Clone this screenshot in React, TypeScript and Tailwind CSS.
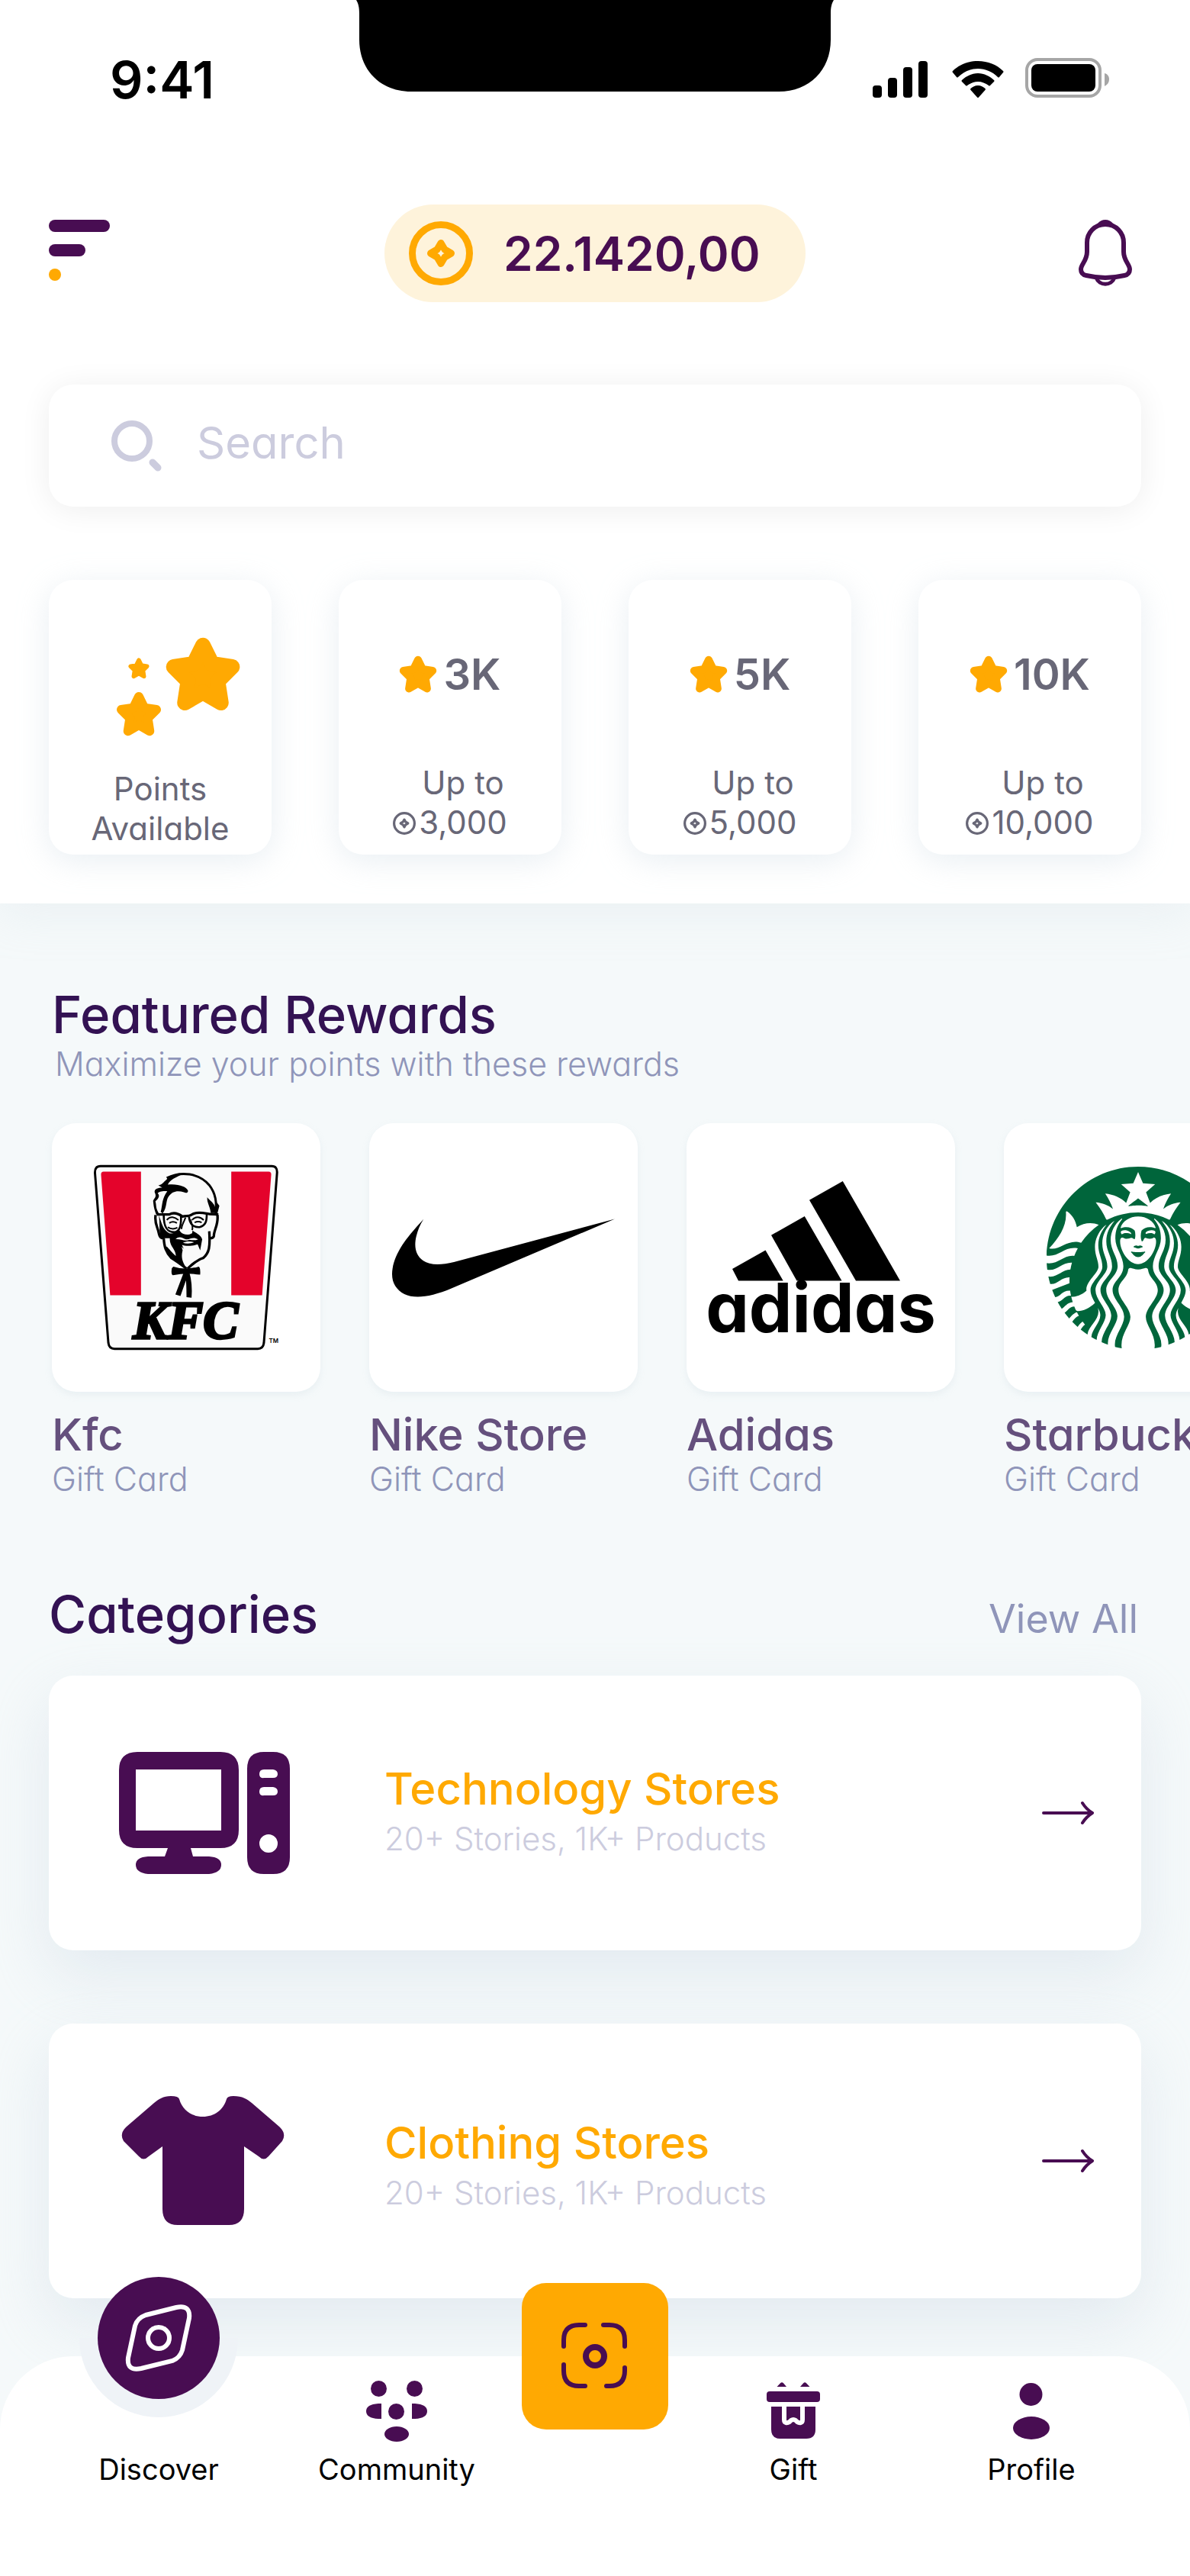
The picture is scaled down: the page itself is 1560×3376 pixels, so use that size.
import type { ReactNode } from 'react';
import { SiStarbucks } from 'react-icons/si';

const tiers = [
  { id: '3k', label: '3K', limit: '3,000' },
  { id: '5k', label: '5K', limit: '5,000' },
  { id: '10k', label: '10K', limit: '10,000' },
];

const rewards = [
  { id: 'kfc', name: 'Kfc', logo: <KfcLogo /> },
  { id: 'nike', name: 'Nike Store', logo: <NikeLogo /> },
  { id: 'adidas', name: 'Adidas', logo: <AdidasLogo /> },
  { id: 'starbucks', name: 'Starbucks', logo: <SiStarbucks className="h-60 w-60 text-[#00653b]" /> },
];

const categories = [
  { id: 'tech', title: 'Technology Stores', icon: <ComputerIcon />, textClass: 'pb-2' },
  { id: 'clothing', title: 'Clothing Stores', icon: <ShirtIcon />, textClass: 'pt-2' },
];

function Notch() {
  return (
    <svg viewBox="0 0 626 120" className="h-[120px] w-[626px] shrink-0" aria-hidden="true">
      <path d="M0 0C3 5 4 10 4 18V52C4 92 32 120 72 120H554C594 120 622 92 622 52V18C622 10 623 5 626 0Z" />
    </svg>
  );
}

function StatusIcons() {
  return (
    <div className="flex items-center">
      <svg viewBox="0 0 72 56" className="h-14 w-[72px]" aria-hidden="true">
        <rect x="0" y="36" width="12" height="16" rx="4" />
        <rect x="20" y="26" width="12" height="26" rx="4" />
        <rect x="40" y="12" width="12" height="40" rx="4" />
        <rect x="60" y="4" width="12" height="48" rx="4" />
      </svg>
      <svg viewBox="0 0 68 56" className="ml-8 h-14 w-[68px]" aria-hidden="true">
        <path d="M34 4C21 4 9 9 1 17Q0 18 1 19L6 25Q7 26 8 25C15 18 24 14 34 14S53 18 60 25Q61 26 62 25L67 19Q68 18 67 17C59 9 47 4 34 4Z" />
        <path d="M34 20C26 20 18 24 13 29Q12 30 13 31L18 36Q19 37 20 36C24 33 29 31 34 31S44 33 48 36Q49 37 50 36L55 31Q56 30 55 29C50 24 42 20 34 20Z" />
        <path d="M34 36C30 36 27 38 24.500 40Q23.500 41 24.500 42L33 51.500Q34 52.500 35 51.500L43.500 42Q44.500 41 43.500 40C41 38 38 36 34 36Z" />
      </svg>
      <svg viewBox="0 0 112 56" className="ml-7 h-14 w-28" aria-hidden="true">
        <rect x="2" y="2" width="96" height="48" rx="14" fill="none" stroke="#a6a6a6" strokeWidth="4" />
        <rect x="8" y="8" width="84" height="36" rx="8" />
        <path d="M104 20C108 21 110 24 110 28S108 35 104 37Z" fill="#a6a6a6" />
      </svg>
    </div>
  );
}

function CoinIcon({ className }: { className: string }) {
  return (
    <svg viewBox="-42 -42 84 84" className={className} fill="none" stroke="currentColor" strokeWidth="9" strokeLinejoin="round" aria-hidden="true">
      <circle r="37.500" />
      <path d="M0-13.500L5-5L13.500 0L5 5L0 13.500L-5 5L-13.500 0L-5-5Z" />
    </svg>
  );
}

function Star({ className }: { className: string }) {
  return (
    <svg viewBox="0 0 24 24" className={className} fill="#ffa902" stroke="#ffa902" strokeWidth="4.800" strokeLinejoin="round" aria-hidden="true">
      <path d="M12 2.800L14.880 8.640L21.200 9.600L16.660 14.110L17.700 20.900L12 17.600L6.300 20.900L7.340 14.110L2.800 9.600L9.120 8.640Z" />
    </svg>
  );
}

function BellIcon() {
  return (
    <svg viewBox="0 0 96 88" className="h-[88px] w-24" fill="none" stroke="#480d52" strokeWidth="6" aria-hidden="true">
      <path d="M49 6C35 6 25 17 25 30V42C25 54 17 58 17 65C17 69 19 72 24 73C41 77 57 77 74 73C79 72 81 69 81 65C81 58 73 54 73 42V30C73 17 63 6 49 6Z" />
      <path d="M40 6C45 0 53 0 58 6Z" fill="#480d52" strokeWidth="3" />
      <path d="M37 76C41 87 57 87 61 76" strokeWidth="5" />
    </svg>
  );
}

function KfcLogo() {
  return (
    <svg viewBox="72 70 733 736" className="h-[244px] w-[244px]" role="img" aria-label="KFC">
      <path d="M100 77H777Q800 77 798 104L746 776Q743 799 722 799H155Q134 799 131 776L78 104Q77 77 100 77Z" fill="#fafafa" stroke="#000" strokeWidth="9" />
      <path d="M112 99H260V587H138L102 110Q102 99 112 99ZM617 99H765Q775 99 775 110L739 587H617Z" fill="#e4032b" />
      {/* hair and head outline */}
      <path d="M362 124C420 94 490 106 530 152C556 186 560 220 555 262" fill="none" stroke="#000" strokeWidth="9" />
      <path d="M328 152C352 152 356 116 402 112L430 106C400 120 374 130 366 150C408 146 440 158 446 174C446 184 436 184 430 180C404 172 384 176 370 196C356 214 366 234 346 264L338 258C346 226 342 206 364 176C346 174 330 178 326 184C338 196 326 208 317 216C322 232 316 240 332 266L320 268C312 246 310 236 308 214C312 202 324 200 314 180C312 166 330 162 344 162Z" />
      <path d="M522 200C532 216 556 222 558 262L536 262C534 238 520 222 522 200ZM560 220L570 234L560 272L552 264Z" />
      {/* glasses */}
      <path d="M322 268H372C390 258 410 266 424 276C438 272 450 276 458 270C480 256 506 262 530 266L566 268" fill="none" stroke="#000" strokeWidth="10" />
      <path d="M350 272C350 320 364 338 392 338C412 336 420 314 418 274M450 278C452 304 466 320 492 318C516 312 520 294 520 268" fill="none" stroke="#000" strokeWidth="8" />
      <path d="M362 290C376 272 394 278 408 290M462 290C476 274 494 276 508 290M372 302Q386 292 402 302M472 300Q486 292 500 300M366 318Q384 330 404 320" fill="none" stroke="#000" strokeWidth="6" />
      {/* ears, cheeks and jaw */}
      <path d="M318 270C312 300 326 318 330 340C334 360 340 362 352 362M562 270C568 304 548 330 548 354Q546 362 532 362M350 362C352 396 358 416 380 440Q400 452 440 482M530 334C534 396 530 420 506 440Q480 448 444 482" fill="none" stroke="#000" strokeWidth="10" />
      <path d="M330 270C342 300 346 330 372 342C390 346 400 338 410 328L416 336C426 348 446 352 462 342L464 332C482 344 496 350 502 366L494 410L484 386C456 396 432 392 422 388L434 414L424 412C418 440 424 454 440 482L396 452C382 434 364 426 356 404L362 394C378 412 388 424 398 432C398 404 372 394 374 362L338 362C330 334 336 302 330 270Z" />
      <path d="M396 366C412 350 424 362 438 366C456 368 462 354 486 366C470 374 458 366 446 370C430 374 414 364 396 366ZM426 380C440 372 456 374 470 378C456 384 438 384 426 380Z" fill="#fafafa" />
      <path d="M436 280C428 304 420 308 420 326M456 288C460 308 468 316 462 330" fill="none" stroke="#000" strokeWidth="6" />
      <path d="M420 396C430 416 420 430 444 472C454 444 464 452 466 432" fill="#fafafa" />
      {/* bow tie */}
      <path d="M388 474Q436 490 488 474Q496 478 494 506Q440 498 386 508Q378 506 382 480Z" />
      <path d="M428 500H448L416 590L396 584ZM442 500H452Q464 540 460 597L440 595Q440 540 436 510Z" />
      <text x="436" y="757" textAnchor="middle" className="font-['Liberation_Serif',serif] text-[208px] font-bold italic" stroke="#000" strokeWidth="10">
        KFC
      </text>
      <text x="766" y="777" className="font-['Inter',sans-serif] text-[24px] font-semibold">
        TM
      </text>
    </svg>
  );
}

function NikeLogo() {
  return (
    <svg viewBox="0 7.800 24 8.400" className="h-[103px] w-[292px]" role="img" aria-label="Nike">
      <path d="M24 7.800L6.442 15.276c-1.456.616-2.679.925-3.668.925-1.120 0-1.933-.392-2.437-1.177-.317-.504-.410-1.143-.280-1.918.130-.775.476-1.600 1.036-2.478.467-.710 1.232-1.643 2.297-2.800a6.122 6.122 0 00-.784 1.848c-.280 1.195-.028 2.072.756 2.632.373.261.886.392 1.540.392.522 0 1.110-.084 1.764-.252L24 7.800z" />
    </svg>
  );
}

function AdidasLogo() {
  return (
    <svg viewBox="0 0 296 200" className="h-[200px] w-[296px] overflow-visible" role="img" aria-label="adidas">
      <path d="M32 115L75.500 90.400L98.700 130.400H40ZM83 70.700L126.800 46L175.500 130.400H116.500ZM133 24.800L176.800 0L252 130.400H194Z" />
      <text x="148" y="198" textAnchor="middle" className="font-['Inter',sans-serif] text-[90px] font-bold">
        adidas
      </text>
    </svg>
  );
}

function ComputerIcon() {
  return (
    <svg viewBox="0 0 224 160" className="h-40 w-56" fill="#480d52" aria-hidden="true">
      <path fillRule="evenodd" d="M24 0H133Q157 0 157 24V102Q157 126 133 126H94L97 137H118Q134 138 134 148T118 160H38Q22 158 22 148T38 137H60L64 126H24Q0 126 0 102V24Q0 0 24 0ZM22 23V103H134V23Z" />
      <path fillRule="evenodd" d="M190 0H202Q224 0 224 22V138Q224 160 202 160H190Q168 160 168 138V22Q168 0 190 0ZM190 23Q184 23 184 29T190 34H202Q208 34 208 29T202 23ZM190 46Q184 46 184 52T190 57H202Q208 57 208 52T202 46ZM196 108A11.500 11.500 0 1 0 196 132A11.500 11.500 0 1 0 196 108Z" />
    </svg>
  );
}

function ShirtIcon() {
  return (
    <svg viewBox="0 0 224 170" className="h-[170px] w-56" fill="#480d52" aria-hidden="true">
      <path d="M68 0Q78 0 79 4C83 18 95 27 110 27S137 18 141 4Q142 0 150 0C162 0 168 4 174 9L210 40Q220 49 214 59L196 79Q190 86 183 79L164 66V148Q164 169 144 169H77Q57 169 57 148V66L39 79Q32 86 26 79L6 59Q0 49 10 40L46 9C52 4 58 0 68 0Z" />
    </svg>
  );
}

function ArrowIcon() {
  return (
    <svg viewBox="0 0 68 32" className="h-8 w-[68px]" fill="none" stroke="#480d52" strokeWidth="4" strokeLinecap="round" strokeLinejoin="round" aria-hidden="true">
      <path d="M2 16H66M53 3Q58 11 66 16Q58 21 53 29" />
    </svg>
  );
}

function CommunityIcon() {
  return (
    <svg viewBox="0 0 80 80" className="h-20 w-20" fill="#480d52" aria-hidden="true">
      <circle cx="16.500" cy="10.500" r="10.500" />
      <circle cx="63.500" cy="10.500" r="10.500" />
      <circle cx="39.500" cy="40.500" r="10.500" />
      <path d="M20 30V50H16Q0 49 0 40T16 30ZM60 30V50H64Q80 49 80 40T64 30Z" />
      <ellipse cx="40" cy="70" rx="16" ry="10" />
    </svg>
  );
}

function GiftIcon() {
  return (
    <svg viewBox="0 0 70 76" className="h-[76px] w-[70px]" fill="#480d52" aria-hidden="true">
      <path d="M13.500 6L18 1.200Q20 -.8 22 1.200L26 6ZM44 6L48.200 1.200Q50 -.8 52 1.200L56.500 6Z" />
      <rect y="12" width="70" height="14" rx="4" />
      <path d="M6 32H64V62Q64 74 52 74H18Q6 74 6 62Z" />
      <path d="M23 31V49C23 54 27 54 30 52L32 50Q35 48 38 50L40 52C43 54 47 54 47 49V31" fill="none" stroke="#fff" strokeWidth="6" />
    </svg>
  );
}

function ProfileIcon() {
  return (
    <svg viewBox="0 0 48 76" className="h-[76px] w-12" fill="#480d52" aria-hidden="true">
      <circle cx="23.500" cy="16" r="15" />
      <ellipse cx="24" cy="60" rx="24" ry="15" />
    </svg>
  );
}

function NavItem({ label, children }: { label: string; children: ReactNode }) {
  return (
    <a href="#" className="flex flex-col items-center gap-3 text-[38px] leading-[48px] text-black">
      <span className="flex h-20 items-center">{children}</span>
      <span>{label}</span>
    </a>
  );
}

export default function App() {
  return (
    <div className="flex min-h-screen flex-col overflow-x-clip bg-[#f5f9fa] font-['Inter',sans-serif] [font-feature-settings:'cv11']">
      <header className="bg-white pb-16 shadow-[0_8px_60px_rgba(200,215,225,0.25)]">
        <div className="grid h-[208px] grid-cols-[1fr_auto_1fr]">
          <div className="flex items-center pl-[144px] text-[68px] font-semibold">9:41</div>
          <Notch />
          <div className="flex items-center justify-end pr-[104px]">
            <StatusIcons />
          </div>
        </div>

        <div className="mt-[60px] flex h-32 items-center justify-between px-16">
          <button type="button" aria-label="Menu" className="w-24">
            <svg viewBox="0 0 96 88" className="h-[88px] w-24" fill="#480d52" aria-hidden="true">
              <rect width="80" height="16" rx="8" />
              <rect y="32" width="48" height="16" rx="8" />
              <circle cx="8" cy="72" r="8" fill="#ffa902" />
            </svg>
          </button>
          <div className="flex h-32 w-[552px] items-center rounded-full bg-[#fef3db] pl-8 text-[62px] font-semibold text-[#480d52]">
            <CoinIcon className="h-[84px] w-[84px] text-[#ffa902]" />
            <span className="ml-10">22.1420,00</span>
          </div>
          <button type="button" aria-label="Notifications" className="w-24">
            <BellIcon />
          </button>
        </div>

        <label className="mx-16 mt-[108px] flex h-40 items-center rounded-[32px] bg-white pl-[82px] shadow-[0_4px_40px_rgba(0,0,0,0.07)]">
          <svg viewBox="0 0 68 68" className="h-[68px] w-[68px] shrink-0" fill="none" stroke="#ccccde" strokeWidth="8" strokeLinecap="round" aria-hidden="true">
            <circle cx="27" cy="28" r="23" />
            <path d="M54 56L61 63" strokeWidth="9" />
          </svg>
          <input
            type="search"
            aria-label="Search"
            placeholder="Search"
            className="ml-11 min-w-0 flex-1 bg-transparent pb-2 text-[58px] outline-none placeholder:text-[#ccccde]"
          />
        </label>

        <div className="mx-16 mt-24 grid grid-cols-4 gap-[88px] text-[42px] leading-[52px] text-[#686777]">
          <div className="h-[360px] rounded-[32px] bg-white pt-[74px] text-center shadow-[0_8px_40px_rgba(200,215,225,0.4)]">
            <div className="flex justify-center gap-1 pl-12">
              <div className="flex flex-col items-center pt-7">
                <Star className="h-7 w-7" />
                <Star className="mt-4 h-[60px] w-[60px]" />
              </div>
              <Star className="h-[100px] w-[100px]" />
            </div>
            <p className="mt-[42px]">
              Points
              <br />
              Available
            </p>
          </div>
          {tiers.map((tier) => (
            <div
              key={tier.id}
              className="h-[360px] rounded-[32px] bg-white pt-[88px] text-center shadow-[0_8px_40px_rgba(200,215,225,0.4)]"
            >
              <div className="flex items-center justify-center gap-2 text-[56px] leading-[72px] font-semibold">
                <Star className="h-[50px] w-[50px]" />
                {tier.label}
              </div>
              <div className="mt-[80px] flex items-end justify-center gap-1">
                <CoinIcon className="mb-[10px] h-[30px] w-[30px]" />
                <p>
                  Up to
                  <br />
                  {tier.limit}
                </p>
              </div>
            </div>
          ))}
        </div>
      </header>

      <main className="flex-1 pt-[106px] pb-[76px]">
        <section className="px-[68px]">
          <h2 className="text-[67px] leading-[80px] font-medium text-[#331253]">Featured Rewards</h2>
          <p className="pl-1 text-[43px] leading-[48px] font-light text-[#8f95b9]">
            Maximize your points with these rewards
          </p>
          <div className="mt-[54px] flex gap-16">
            {rewards.map((reward) => (
              <a key={reward.id} href="#" className="w-[352px] shrink-0">
                <div className="flex h-[352px] items-center justify-center rounded-[32px] bg-white shadow-[0_4px_8px_rgba(200,215,225,0.25)]">
                  {reward.logo}
                </div>
                <h3 className="mt-6 text-[58px] leading-[64px] font-medium whitespace-nowrap text-[#65507d]">
                  {reward.name}
                </h3>
                <p className="text-[43px] leading-[52px] font-light text-[#8f95b9]">Gift Card</p>
              </a>
            ))}
          </div>
        </section>

        <section className="mt-28 px-16">
          <div className="flex items-baseline justify-between">
            <h2 className="text-[67px] leading-[80px] font-medium text-[#331253]">Categories</h2>
            <a href="#" className="pr-1 text-[52px] leading-[64px] text-[#8f95b9]">
              View All
            </a>
          </div>
          <div className="mt-10 flex flex-col gap-24">
            {categories.map((category) => (
              <a
                key={category.id}
                href="#"
                className="flex h-[360px] items-center rounded-[32px] bg-white pr-[62px] pl-[92px] shadow-[0_32px_80px_rgba(190,205,220,0.32)]"
              >
                {category.icon}
                <div className={`ml-[124px] flex-1 ${category.textClass}`}>
                  <h3 className="text-[58px] leading-[72px] font-medium text-[#ffa902]">{category.title}</h3>
                  <p className="mt-1 text-[42px] leading-[52px] font-light text-[#ccccde]">20+ Stories, 1K+ Products</p>
                </div>
                <ArrowIcon />
              </a>
            ))}
          </div>
        </section>
      </main>

      <nav className="grid grid-cols-[3fr_3fr_2fr_3fr_3fr] items-start rounded-t-[96px] bg-white px-[52px] pt-8 pb-[116px]">
        <a href="#" className="relative -mt-[136px] flex flex-col items-center gap-[68px] text-[38px] leading-[48px] text-black">
          <span className="absolute top-20 h-[104px] w-[208px] rounded-b-full bg-[#eff3f7]" />
          <span className="relative flex h-40 w-40 items-center justify-center rounded-full bg-[#480d52]">
            <svg viewBox="0 0 88 88" className="h-[88px] w-[88px]" fill="none" stroke="#fff" strokeWidth="6" aria-hidden="true">
              <path d="M27 14L67 4Q86 0 84 18L75 60Q72 70 62 74L21 84Q2 88 4 70L13 28Q16 18 27 14Z" />
              <circle cx="44" cy="44" r="14" />
            </svg>
          </span>
          <span>Discover</span>
        </a>
        <NavItem label="Community">
          <CommunityIcon />
        </NavItem>
        <button
          type="button"
          aria-label="Scan"
          className="-mt-32 flex h-48 w-48 items-center justify-center justify-self-center rounded-[32px] bg-[#ffa902]"
        >
          <svg viewBox="0 0 88 88" className="h-[88px] w-[88px]" fill="none" stroke="#480d52" strokeWidth="6" strokeLinecap="round" aria-hidden="true">
            <path d="M31 3H23Q3 3 3 23V31M55 3H63Q83 3 83 23V31M3 55V63Q3 83 23 83H31M83 59V63Q83 83 63 83H59" />
            <circle cx="44" cy="44" r="12" strokeWidth="8" />
          </svg>
        </button>
        <NavItem label="Gift">
          <GiftIcon />
        </NavItem>
        <NavItem label="Profile">
          <ProfileIcon />
        </NavItem>
      </nav>
    </div>
  );
}
